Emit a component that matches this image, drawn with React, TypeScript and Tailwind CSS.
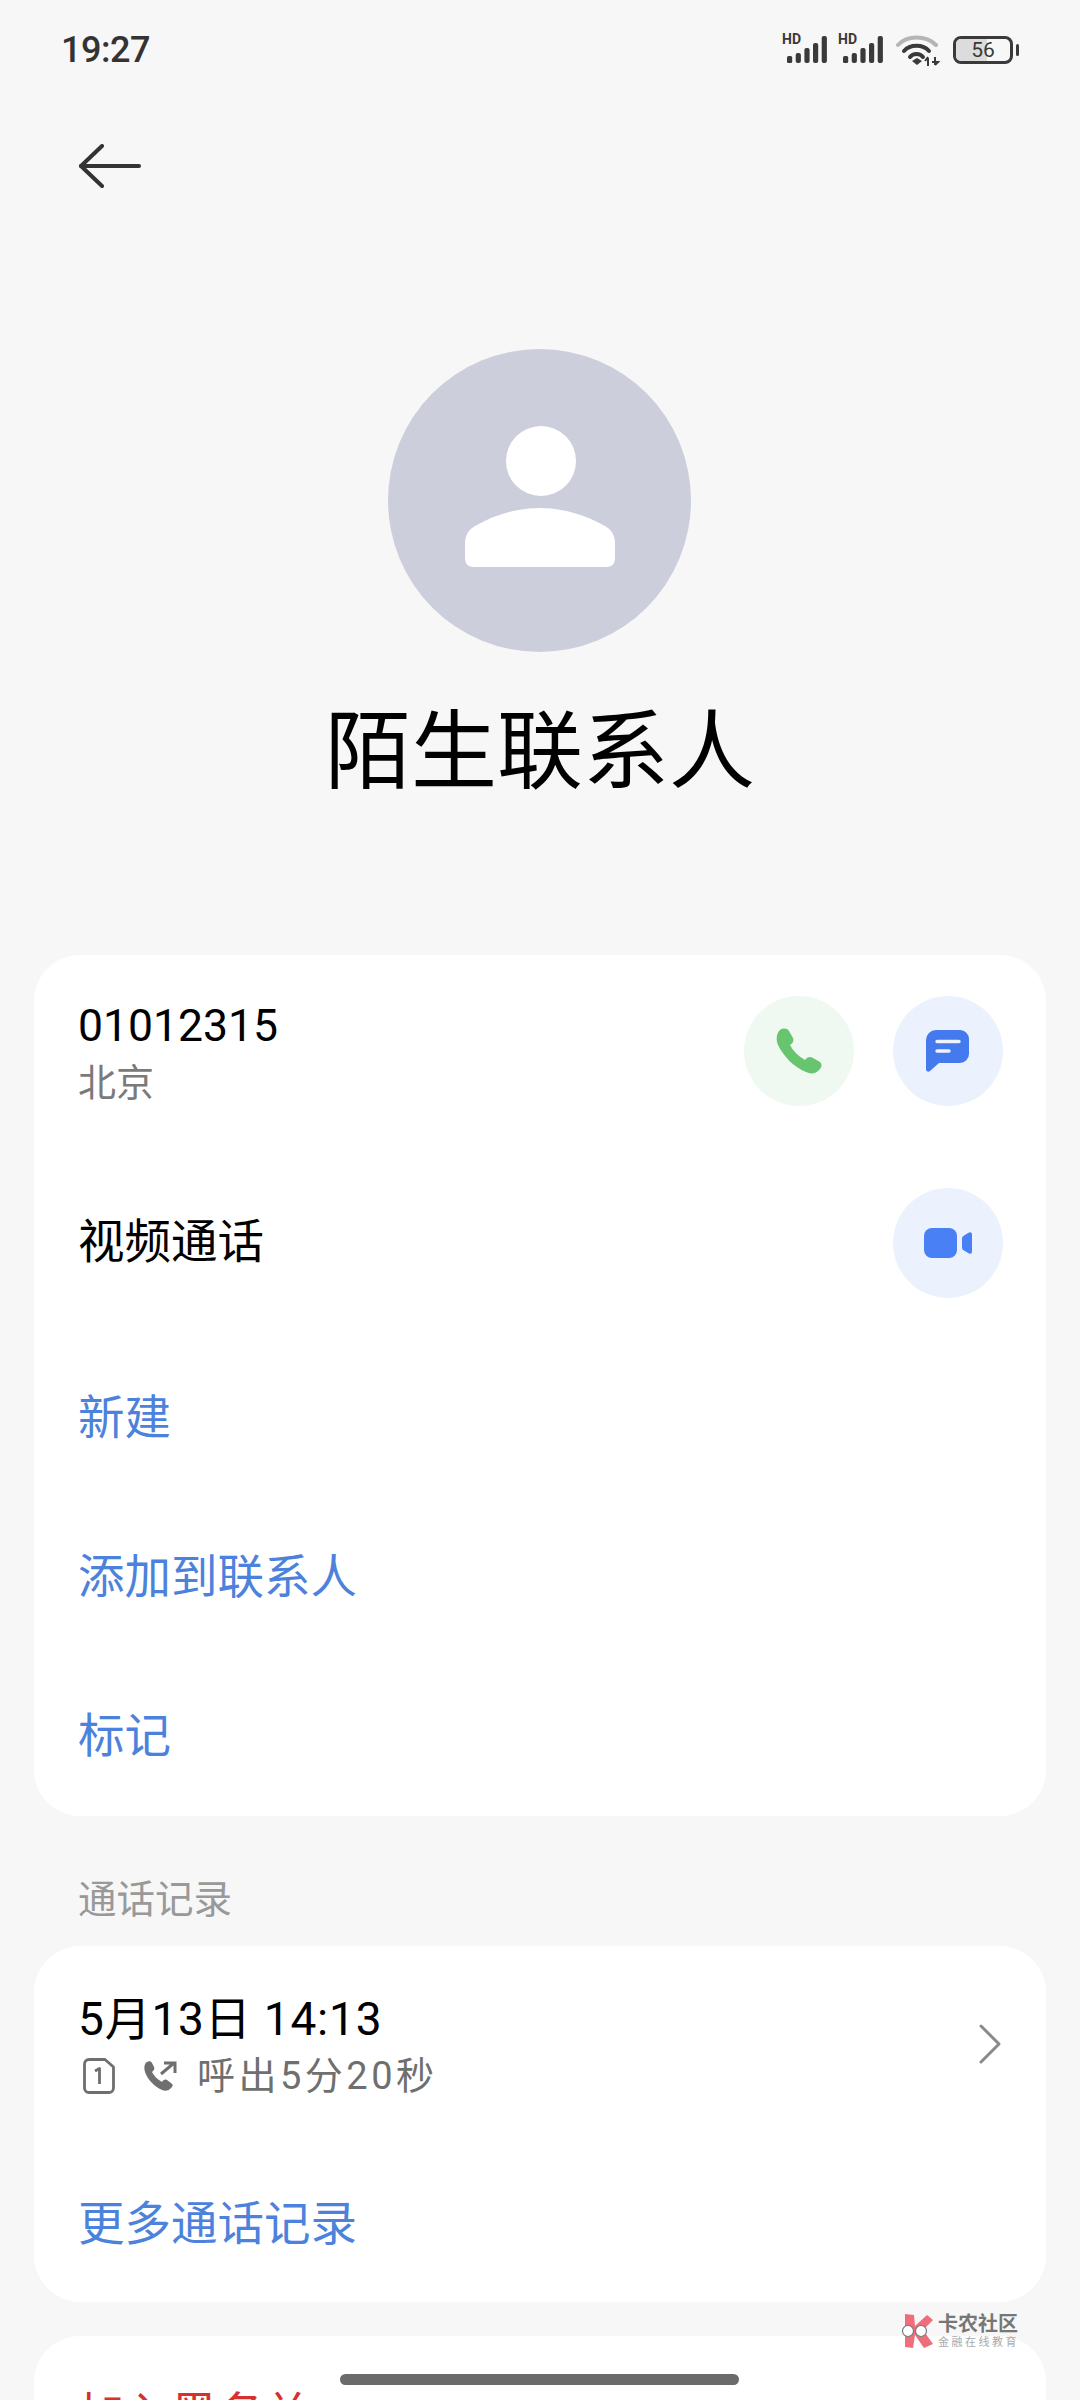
function SignalIcon() {
  return (
    <svg width="46" height="33" viewBox="0 -5 46 33">
      <text x="0" y="9" fontSize="14" fontWeight="700" fill="#3a3a3a" fontFamily="Roboto, sans-serif">HD</text>
      <rect x="5" y="21" width="5.2" height="7" rx="1.5" fill="#3a3a3a" />
      <rect x="13.7" y="18" width="5.2" height="10" rx="2" fill="#3a3a3a" />
      <rect x="22.4" y="13" width="5.2" height="15" rx="2" fill="#3a3a3a" />
      <rect x="31" y="8" width="5.2" height="20" rx="2" fill="#3a3a3a" />
      <rect x="39.7" y="1" width="5.2" height="27" rx="2" fill="#3a3a3a" />
    </svg>
  );
}

function WifiIcon() {
  return (
    <svg width="44" height="32" viewBox="0 0 44 32" fill="none">
      <path d="M2 11 C11 1 30 1 40 11" stroke="#b5b5b5" strokeWidth="4" strokeLinecap="round" />
      <path d="M8 17 C14 10 27 10 33 17" stroke="#3a3a3a" strokeWidth="4" strokeLinecap="round" />
      <path d="M14 23 C17 19 24 19 27 23" stroke="#3a3a3a" strokeWidth="4" strokeLinecap="round" />
      <path d="M16 27 L21 24 L26 27 L21 31 Z" fill="#3a3a3a" />
      <path d="M32 32 V24 M29 27 L32 23 M39 23 V31 M36 28 H42 L39 31" stroke="#3a3a3a" strokeWidth="2" />
    </svg>
  );
}

function BatteryIcon() {
  return (
    <div className="flex items-center gap-[3px]">
      <div className="relative w-[60px] h-[28px] rounded-[8px] border-[3px] border-[#3a3a3a] overflow-hidden">
        <div className="h-full w-[31px] bg-[#dcdcdc]" />
        <span className="absolute inset-0 flex items-center justify-center text-[21px] leading-none text-[#3a3a3a]">56</span>
      </div>
      <div className="w-[3px] h-[12px] rounded-full bg-[#3a3a3a]" />
    </div>
  );
}

function BackArrow() {
  return (
    <svg width="62" height="44" viewBox="0 0 62 44" fill="none" stroke="#333" strokeWidth="4" strokeLinecap="round" strokeLinejoin="round">
      <path d="M23 2 L2 22 L23 42" />
      <path d="M2 22 H60" />
    </svg>
  );
}

function PersonIcon() {
  return (
    <svg width="150" height="141" viewBox="0 0 150 141" fill="#fff">
      <circle cx="76" cy="35" r="35" />
      <path d="M0 118 C0 108 4 103 12 99 C28 90 50 82 75 82 C100 82 122 90 138 99 C146 103 150 108 150 118 V132 Q150 141 141 141 H9 Q0 141 0 132 Z" />
    </svg>
  );
}

function PhoneIcon() {
  return (
    <svg width="46" height="46" viewBox="0 0 46 46" fill="#66c56e">
      <path d="M4 2 C7 0 11 0 13 3 L17 10 C18 13 17 15 14 17 C17 23 22 28 29 32 C31 29 34 28 37 30 L44 34 C46 36 46 39 44 41 L42 43 C39 46 34 46 30 44 C18 39 8 29 2 17 C0 12 0 6 4 2 Z" />
    </svg>
  );
}

function MessageIcon() {
  return (
    <svg width="44" height="42" viewBox="0 0 44 42">
      <path fill="#4579ee" d="M10 0 H34 a9 9 0 0 1 9 9 V24 a9 9 0 0 1 -9 9 H13 L4 41 C2.5 42.5 0 41.5 0 39 V10 A10 10 0 0 1 10 0 Z" />
      <path d="M11 11.5 H33 M11 21 H23" stroke="#eef3fd" strokeWidth="3.4" strokeLinecap="round" />
    </svg>
  );
}

function VideoIcon() {
  return (
    <svg width="48" height="30" viewBox="0 0 48 30" fill="#4a80f5">
      <rect x="0" y="0" width="33" height="30" rx="8" />
      <path d="M38 10 Q38 8.500 40 7.500 L45 4.500 Q48 3.500 48 6.500 V23.500 Q48 26.500 45 25.500 L40 22.500 Q38 21.500 38 20 Z" />
    </svg>
  );
}

function SimIcon() {
  return (
    <svg width="32" height="36" viewBox="0 0 32 36" fill="none">
      <path d="M6 1.500 H22 L30.500 9 V30 A4.500 4.500 0 0 1 26 34.500 H6 A4.500 4.500 0 0 1 1.500 30 V6 A4.500 4.500 0 0 1 6 1.500 Z" stroke="#6f6f6f" strokeWidth="2.8" strokeLinejoin="round" />
      <path d="M12 13 L16.500 10.500 V26" stroke="#6f6f6f" strokeWidth="2.8" strokeLinejoin="round" />
    </svg>
  );
}

function OutgoingCallIcon() {
  return (
    <svg width="34" height="30" viewBox="0 0 34 30">
      <path fill="#6f6f6f" d="M3 1 C5 0 7 0 8 2 L10 6 C11 8 10 9 8 11 C10 15 13 18 18 21 C19 19 21 18 23 19 L27 22 C29 23 29 25 28 26 L26 28 C24 30 21 30 18 29 C10 25 4 19 1 11 C0 7 0 3 3 1 Z" />
      <path d="M17 13 L30 2 M20 2 H31 V12" fill="none" stroke="#6f6f6f" strokeWidth="3" />
    </svg>
  );
}

function WatermarkLogo() {
  return (
    <svg width="36" height="36" viewBox="0 0 36 36">
      <path fill="#ee6e7c" d="M5 1 L14 2 L15 13 L27 2 L33 7 L23 17 L33 31 L24 35 L15 22 L13 35 L5 34 Z" />
      <circle cx="8" cy="18" r="5.500" fill="#fff" stroke="#777" strokeWidth="1.200" />
      <circle cx="21" cy="18" r="5.500" fill="#fff" stroke="#777" strokeWidth="1.200" />
    </svg>
  );
}

function ActionRow({ label, height, red, className }: { label: string; height: string; red?: boolean; className?: string }) {
  return (
    <div className={`${height} flex items-center px-11 text-[46.500px] ${red ? "text-[#d5312f]" : "text-[#4c82dc]"} ${className ?? ""}`}>
      {label}
    </div>
  );
}

export default function App() {
  return (
    <div className="relative w-[1080px] h-[2400px] overflow-hidden bg-[#f7f7f7] font-[Roboto,'Noto_Sans_CJK_SC',sans-serif]">
      <div className="h-[100px] flex items-center justify-between pl-[61px] pr-[61px]">
        <span className="text-[36px] leading-none font-medium text-[#333] tracking-[-0.5px]">19:27</span>
        <div className="flex items-center">
          <div className="mb-[7px]"><SignalIcon /></div>
          <div className="ml-[10px] mb-[7px]"><SignalIcon /></div>
          <div className="ml-[12px]"><WifiIcon /></div>
          <div className="ml-[13px]"><BatteryIcon /></div>
        </div>
      </div>

      <div className="h-[134px] flex items-center pl-[79px] pb-[2px]">
        <BackArrow />
      </div>

      <div className="mt-[115px] flex justify-center pr-[1px]">
        <div className="w-[303px] h-[303px] rounded-full bg-[#cccfdb] flex items-center justify-center pb-[8px]">
          <PersonIcon />
        </div>
      </div>

      <h1 className="mt-[40px] h-[120px] flex items-center justify-center text-[86px] font-normal text-black">
        陌生联系人
      </h1>

      <div className="mt-[143px] mx-[34px] rounded-[46px] bg-white">
        <div className="h-[192px] flex items-center justify-between pl-11 pr-[43px]">
          <div className="flex flex-col pt-[6px]">
            <span className="text-[44.500px] leading-[58px] text-black">01012315</span>
            <span className="text-[38px] leading-[56px] text-[#7a7a7a]">北京</span>
          </div>
          <div className="flex items-center gap-[39px]">
            <div className="w-[110px] h-[110px] rounded-full bg-[#eff9f1] flex items-center justify-center">
              <PhoneIcon />
            </div>
            <div className="w-[110px] h-[110px] rounded-full bg-[#ecf2fd] flex items-center justify-center">
              <MessageIcon />
            </div>
          </div>
        </div>
        <div className="h-[192px] flex items-center justify-between pl-11 pr-[43px] text-[46.500px] text-black">
          <span>视频通话</span>
          <div className="w-[110px] h-[110px] rounded-full bg-[#ecf2fd] flex items-center justify-center">
            <VideoIcon />
          </div>
        </div>
        <ActionRow label="新建" height="h-[159px]" />
        <ActionRow label="添加到联系人" height="h-[160px]" />
        <ActionRow label="标记" height="h-[158px]" />
      </div>

      <div className="h-[130px] flex items-center px-[78px] pt-[37px] text-[38.500px] text-[#999]">通话记录</div>

      <div className="mx-[34px] rounded-[46px] bg-white">
        <div className="h-[196px] flex items-center justify-between pl-11 pr-11">
          <div className="flex flex-col pt-[6px]">
            <span className="text-[46px] leading-[58px] text-black tracking-[0.800px]">5月13日 14:13</span>
            <div className="flex items-center h-[56px] pl-[5px]">
              <SimIcon />
              <div className="ml-[29px]"><OutgoingCallIcon /></div>
              <span className="ml-[19px] text-[38px] text-[#6f6f6f] tracking-[3.500px]">呼出5分20秒</span>
            </div>
          </div>
          <svg width="24" height="42" viewBox="0 0 24 42" fill="none" stroke="#8a8a8a" strokeWidth="3" strokeLinecap="round" strokeLinejoin="round">
            <path d="M3 3 L21 21 L3 39" />
          </svg>
        </div>
        <ActionRow label="更多通话记录" height="h-[160px]" className="pt-[5px]" />
      </div>

      <div className="mt-[34px] mx-[34px] rounded-[46px] bg-white">
        <ActionRow label="加入黑名单" height="h-[160px]" red />
      </div>

      <div className="absolute left-[900px] top-[2312px] flex items-center gap-[2px]">
        <WatermarkLogo />
        <div className="flex flex-col">
          <span className="text-[20px] leading-[24px] font-bold text-[#777]">卡农社区</span>
          <span className="text-[11px] leading-[14px] tracking-[2.5px] text-[#aaa]">金融在线教育</span>
        </div>
      </div>

      <div className="absolute left-[340px] top-[2374px] w-[399px] h-[11px] rounded-full bg-[#6b6b6b]" />
    </div>
  );
}
